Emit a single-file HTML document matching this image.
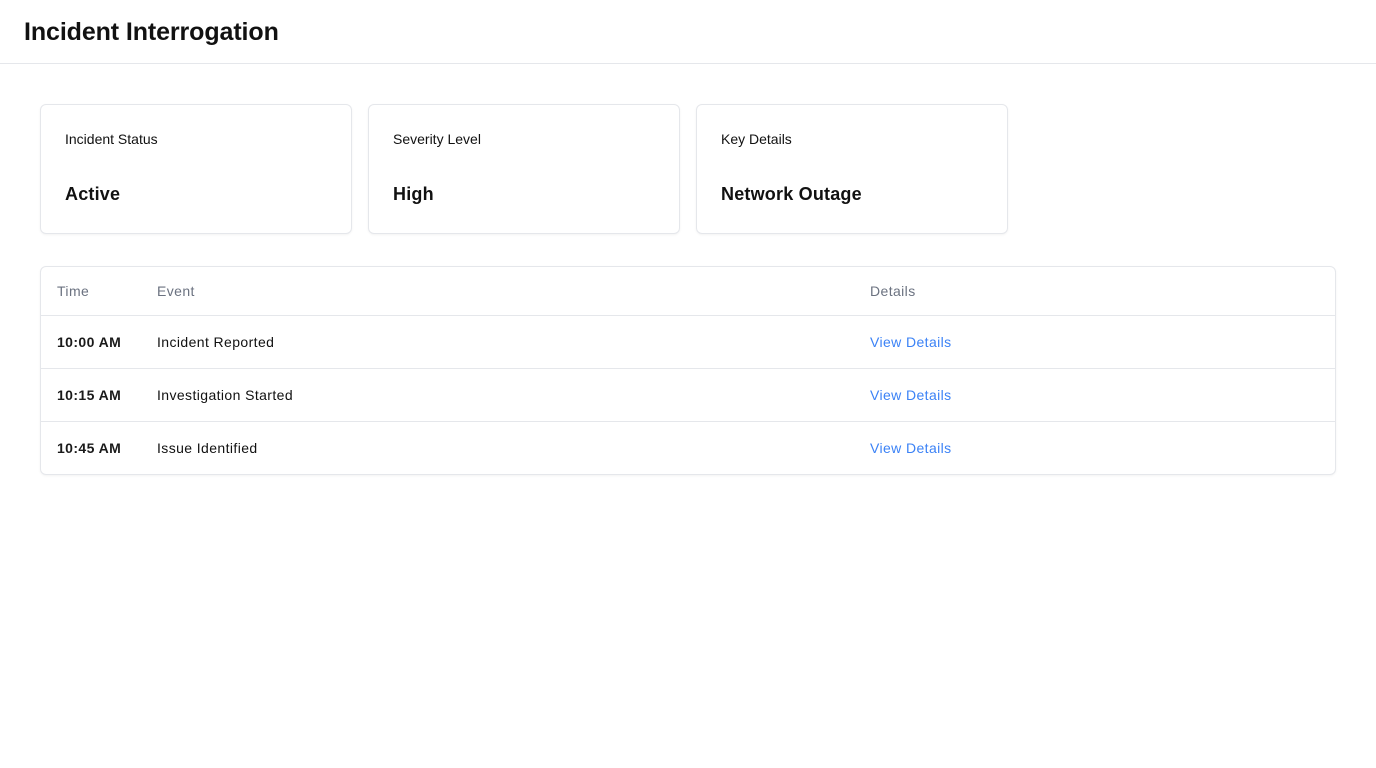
<!DOCTYPE html>
<html><head><meta charset="utf-8"><style>
*{margin:0;padding:0;box-sizing:border-box}
body{width:1376px;height:768px;background:#fff;font-family:"Liberation Sans",sans-serif;color:#111;position:relative;overflow:hidden}
.hdr{position:absolute;left:0;top:0;width:1376px;height:64px;border-bottom:1px solid #e5e7eb}
.hdr h1{position:absolute;left:24px;top:18px;font-size:25px;font-weight:700;letter-spacing:-0.1px}
.card{position:absolute;top:104px;width:312px;height:130px;border:1px solid #e5e7eb;border-radius:6px;box-shadow:0 1px 2px rgba(0,0,0,.05)}
.card .l{position:absolute;left:24px;top:26px;font-size:14px;color:#111}
.card .v{position:absolute;left:24px;top:79px;font-size:18px;font-weight:700;letter-spacing:0.2px}
.tbl{position:absolute;left:40px;top:266px;width:1296px;height:209px;border:1px solid #e5e7eb;border-radius:6px;box-shadow:0 1px 2px rgba(0,0,0,.05)}
.row{position:absolute;left:0;width:1294px;font-size:14px;letter-spacing:0.4px}
.row span{position:absolute}
.c1{left:16px;color:#1a1a1a}.c2{left:116px}.c3{left:829px}
.th{color:#6b7280}
.line{position:absolute;left:0;width:1294px;height:1px;background:#e5e7eb}
.a{color:#3b82f6}
</style></head><body>
<div class="hdr"><h1>Incident Interrogation</h1></div>
<div class="card" style="left:40px"><div class="l">Incident Status</div><div class="v">Active</div></div>
<div class="card" style="left:368px"><div class="l">Severity Level</div><div class="v">High</div></div>
<div class="card" style="left:696px"><div class="l">Key Details</div><div class="v">Network Outage</div></div>
<div class="tbl">
<div class="row th" style="top:16px"><span class="c1" style="color:#6b7280">Time</span><span class="c2">Event</span><span class="c3">Details</span></div>
<div class="line" style="top:48px"></div>
<div class="row" style="top:67px"><span class="c1" style="font-weight:600">10:00 AM</span><span class="c2">Incident Reported</span><span class="c3 a">View Details</span></div>
<div class="line" style="top:101px"></div>
<div class="row" style="top:120px"><span class="c1" style="font-weight:600">10:15 AM</span><span class="c2">Investigation Started</span><span class="c3 a">View Details</span></div>
<div class="line" style="top:154px"></div>
<div class="row" style="top:173px"><span class="c1" style="font-weight:600">10:45 AM</span><span class="c2">Issue Identified</span><span class="c3 a">View Details</span></div>
</div>
</body></html>
